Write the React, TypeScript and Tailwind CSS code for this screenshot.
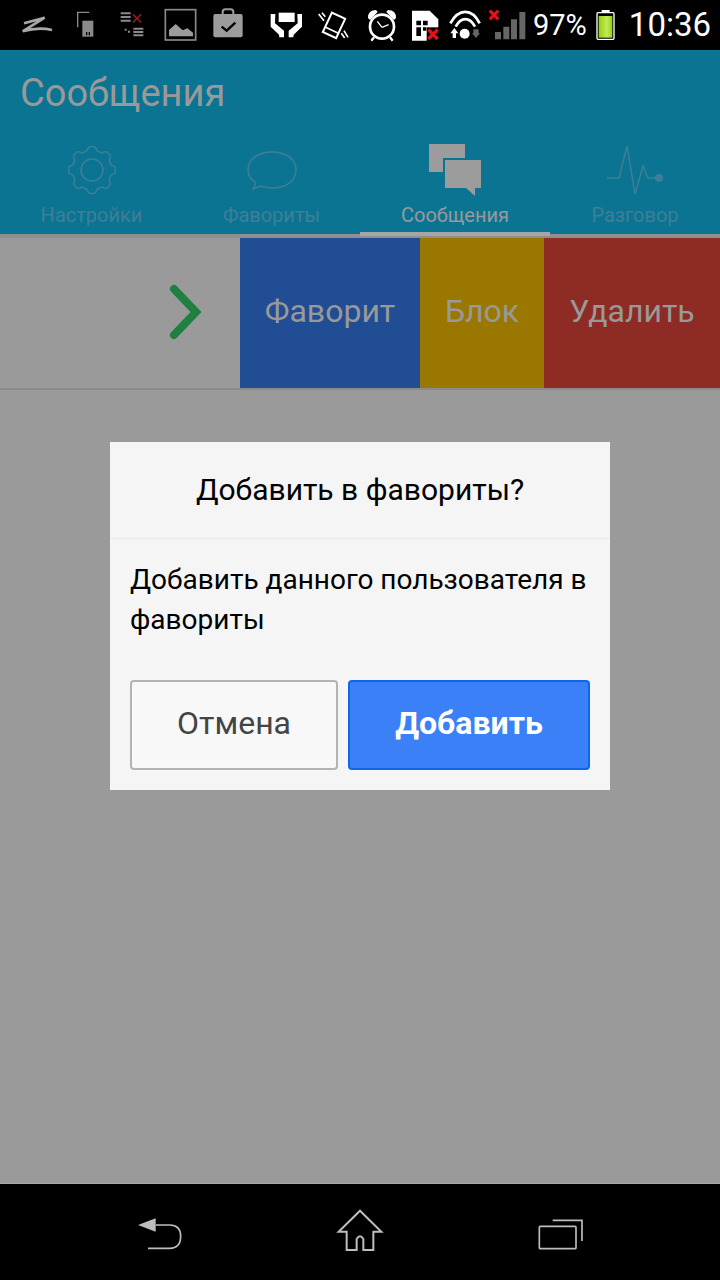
const FONT = "font-['Roboto',sans-serif]"

function gearPath() {
  const pts: string[] = []
  for (let i = 0; i < 160; i++) {
    const a = (i / 160) * Math.PI * 2
    const r = 21.5 + 2 * Math.tanh(2.2 * Math.cos(8 * a))
    pts.push(`${(24 + r * Math.cos(a)).toFixed(2)},${(24 + r * Math.sin(a)).toFixed(2)}`)
  }
  return `M${pts.join("L")}Z`
}

function RedX({ x, y, s }: { x: number; y: number; s: number }) {
  return (
    <path
      d={`M${x - s} ${y - s}L${x + s} ${y + s}M${x + s} ${y - s}L${x - s} ${y + s}`}
      stroke="#e8101a"
      strokeWidth={s * 0.7}
      fill="none"
    />
  )
}

function StatusIcons() {
  return (
    <>
      {/* coordinates are 3x picture px */}
      <svg className="ml-[20px] shrink-0" width={34} height={50} viewBox="60 0 102 150">
        <path d="M72 70L134 53L68 94C95 86 130 84 156 90" fill="none" stroke="#a8a8a8" strokeWidth={8} />
      </svg>
      <svg className="ml-[22px] shrink-0" width={18} height={50} viewBox="226 0 54 150">
        <path d="M266 37H231V82" fill="none" stroke="#8a8a8a" strokeWidth={4} />
        <path d="M245 62H278V110H245Z" fill="#8a8a8a" />
        <path d="M256 96h4v10h-4zM264 96h4v10h-4z" fill="#000" />
      </svg>
      <svg className="ml-[26px] shrink-0" width={26} height={50} viewBox="360 0 78 150">
        <path d="M362 40H392M362 51H392M362 62H392M400 86H430M400 96H430M400 106H430" stroke="#8a8a8a" strokeWidth={6} />
        <path d="M374 86h6v6h-6zM384 92h6v6h-6z" fill="#8a8a8a" />
        <path d="M399 43L423 67M423 43L399 67" stroke="#8c1c20" strokeWidth={5} />
      </svg>
      <svg className="ml-[18px] shrink-0" width={33} height={50} viewBox="490 0 99 150">
        <rect x={494} y={29} width={91} height={91} fill="none" stroke="#8a8a8a" strokeWidth={5} />
        <path d="M505 109V90L525 72L546 91L560 85L577 98V109Z" fill="#9c9c9c" />
      </svg>
      <svg className="ml-[16px] shrink-0" width={31} height={50} viewBox="639 0 93 150">
        <path d="M668 44V36Q668 28 676 28H692Q700 28 700 36V44" fill="none" stroke="#9c9c9c" strokeWidth={6} />
        <rect x={640} y={42} width={88} height={70} rx={6} fill="#9c9c9c" />
        <path d="M665 80L680 92L706 68" fill="none" stroke="#000" strokeWidth={7} />
      </svg>
      <svg className="ml-[26px] shrink-0" width={33} height={50} viewBox="810 0 99 150">
        <path d="M836 38H884V66H836Z" fill="#fff" />
        <path d="M812 42H826L825 70L852 92V112H838L837 104L812 80Z" fill="#fff" />
        <path d="M906 42H892L893 70L866 92V112H880L881 104L906 80Z" fill="#fff" />
      </svg>
      <svg className="ml-[15px] shrink-0" width={32} height={50} viewBox="954 0 96 150">
        <g transform="rotate(25 1002 76)">
          <rect x={980} y={44} width={44} height={64} fill="none" stroke="#fff" strokeWidth={6} />
          <path d="M980 92H1024" stroke="#fff" strokeWidth={5} />
        </g>
        <path d="M956 42L972 62M966 38L976 50M1032 92L1044 112M1024 100L1034 114" stroke="#fff" strokeWidth={5} />
      </svg>
      <svg className="ml-[16px] shrink-0" width={33} height={50} viewBox="18 0 99 150">
        <circle cx={66} cy={80} r={36} fill="none" stroke="#fff" strokeWidth={8} />
        <path d="M24 54Q24 30 48 30L53 36L30 60ZM108 54Q108 30 84 30L79 36L102 60Z" fill="#fff" />
        <path d="M66 82L52 64M66 82L86 74" fill="none" stroke="#fff" strokeWidth={4} />
        <path d="M42 112l-8 10M90 112l8 10" stroke="#fff" strokeWidth={7} />
      </svg>
      <svg className="ml-[13px] shrink-0" width={28} height={50} viewBox="153 0 84 150">
        <path d="M153 32H206L232 58V122H153Z" fill="#fff" />
        <path d="M166 62h14v14h-14zM186 62h14v14h-14zM166 82h14v26h-14zM186 82h10v10h-10z" fill="#000" />
        <path d="M197 82H237V126H197Z" fill="#000" />
        <RedX x={216} y={103} s={14} />
      </svg>
      <svg className="ml-[9px] shrink-0" width={34} height={50} viewBox="264 0 102 150">
        <path d="M268 70C293 24 333 24 356 70" fill="none" stroke="#fff" strokeWidth={8} />
        <path d="M284 80C300 50 326 50 342 80" fill="none" stroke="#fff" strokeWidth={8} />
        <circle cx={311} cy={101} r={15} fill="#fff" />
        <path d="M268 100L280 84L292 100H285V114H275V100Z" fill="#fff" />
        <path d="M337 88H353V100H357L345 114L333 100H337Z" fill="#666" />
      </svg>
      <svg className="ml-[5px] shrink-0" width={38} height={50} viewBox="378 0 114 150">
        <path d="M399 96H417V118H399ZM424 80H442V118H424ZM447 58H465V118H447ZM472 36H490V118H472Z" fill="#666" />
        <RedX x={396} y={45} s={13} />
      </svg>
      <span className="ml-[7px] text-[29px] leading-[50px] text-white">97%</span>
      <svg className="ml-[9px] shrink-0" width={20} height={50} viewBox="708 0 60 150">
        <path d="M725 36V30H749V36" fill="#fff" />
        <rect x={711} y={38} width={51} height={80} rx={3} fill="#000" stroke="#fff" strokeWidth={4} />
        <defs>
          <linearGradient id="batt" x1="0" x2="1" y1="0" y2="0">
            <stop offset="0" stopColor="#8fd010" />
            <stop offset="0.6" stopColor="#c4ec58" />
            <stop offset="1" stopColor="#8fd010" />
          </linearGradient>
        </defs>
        <rect x={716} y={48} width={41} height={65} fill="url(#batt)" />
      </svg>
      <span className="ml-[13px] text-[33px] leading-[50px] text-white">10:36</span>
    </>
  )
}

function Tab({
  label,
  width,
  active,
  icon,
}: {
  label: string
  width: string
  active?: boolean
  icon: React.ReactNode
}) {
  return (
    <div className={`relative flex flex-col items-center ${width}`}>
      <div className="flex h-[52px] items-center justify-center">{icon}</div>
      <span className={`mt-[7px] text-[20px] leading-[24px] ${active ? "text-[#999999]" : "text-[#3f7f96]"}`}>
        {label}
      </span>
      {active ? <div className="absolute bottom-[-2px] left-0 right-0 h-[4px] bg-[#a6a6a6]" /> : null}
    </div>
  )
}

export default function App() {
  return (
    <div className={`relative flex h-[1280px] w-[720px] flex-col overflow-hidden bg-[#9a9a9a] ${FONT}`}>
      <div className="flex h-[50px] shrink-0 items-center bg-black">
        <StatusIcons />
      </div>

      <div className="h-[184px] shrink-0 bg-[#0b7493]">
        <h1 className="pl-[20px] pt-[22px] text-[38px] font-normal leading-[42px] text-[#999999]">Сообщения</h1>
        <div className="mt-[30px] flex h-[90px]">
          <Tab
            label="Настройки"
            width="w-[183px]"
            icon={
              <svg width={48} height={48} viewBox="0 0 48 48" fill="none" stroke="#3f7f96" strokeWidth={1.5}>
                <path d={gearPath()} />
                <circle cx={24} cy={24} r={11} />
              </svg>
            }
          />
          <Tab
            label="Фавориты"
            width="w-[177px]"
            icon={
              <svg width={52} height={48} viewBox="0 0 52 48" fill="none" stroke="#3f7f96" strokeWidth={1.5}>
                <path d="M7 43C9 39 10 38 9 36C4 33 2 29 2 24C2 13 12 6 26 6C40 6 50 13 50 24C50 35 40 42 26 42C21 42 17 41 14 40C12 41 10 42 7 43Z" />
              </svg>
            }
          />
          <Tab
            label="Сообщения"
            width="w-[190px]"
            active
            icon={
              <svg width={52} height={52} viewBox="0 0 52 52" fill="#9c9c9c">
                <path d="M0 0H36V14H14V28H0Z" />
                <path d="M16 16H52V44H46V52L37 44H16Z" />
              </svg>
            }
          />
          <Tab
            label="Разговор"
            width="w-[170px]"
            icon={
              <svg width={56} height={50} viewBox="0 0 56 50" fill="none" stroke="#3f7f96" strokeWidth={1.5}>
                <path d="M0 33H12L20 1L28 49L36 21L41 33H52" />
                <circle cx={52} cy={33} r={4} fill="#3f7f96" stroke="none" />
              </svg>
            }
          />
        </div>
      </div>

      <div className="h-[4px] shrink-0 bg-[#8f8f8f]" />

      <div className="flex h-[152px] shrink-0 border-b-2 border-[#8a8a8a] bg-[#9a9a9a]">
        <div className="flex h-[150px] w-[240px] items-center justify-end pb-[2px] pr-[36px]">
          <svg width={36} height={60} viewBox="0 0 36 60" fill="none" stroke="#1f8040" strokeWidth={8}>
            <path d="M6 7L28 30L6 53" strokeLinecap="round" />
          </svg>
        </div>
        <div className="flex h-[150px] w-[180px] items-center justify-center bg-[#214d94] pb-[4px] text-[32px] text-[#999999]">
          Фаворит
        </div>
        <div className="flex h-[150px] w-[124px] items-center justify-center bg-[#9a7800] pb-[4px] text-[32px] text-[#999999]">
          Блок
        </div>
        <div className="flex h-[150px] w-[176px] items-center justify-center bg-[#8e2b24] pb-[4px] text-[32px] text-[#999999]">
          Удалить
        </div>
      </div>

      <div className="flex-1" />

      <div className="flex h-[97px] shrink-0 items-center border-t border-[#a8a8a8] bg-black">
        <svg className="ml-[137px] mt-[6px]" width={48} height={36} viewBox="112 118 144 108" fill="none">
          <path d="M168 142H210Q243 142 243 176Q243 212 210 212H145" stroke="#bdbdbd" strokeWidth={5} />
          <path d="M115 142L168 122V162Z" fill="#bdbdbd" />
        </svg>
        <svg className="mb-[2px] ml-[151px]" width={48} height={44} viewBox="708 90 144 132" fill="none">
          <path
            d="M716 158L780 95L844 158H820V213H790V180Q780 164 770 180V213H740V158Z"
            stroke="#bdbdbd"
            strokeWidth={6}
          />
        </svg>
        <svg className="ml-[154px] mt-[6px]" width={46} height={32} viewBox="1312 124 138 96" fill="none" stroke="#bdbdbd">
          <rect x={1316} y={146} width={110} height={67} rx={3} strokeWidth={5} />
          <path d="M1356 128H1444V190" strokeWidth={5} />
        </svg>
      </div>

      <div className="absolute left-[110px] top-[442px] w-[500px] bg-[#f5f5f5]">
        <div className="flex h-[97px] items-center justify-center border-b border-[#e8e8e8] pb-[2px] text-[30px] text-black">
          Добавить в фавориты?
        </div>
        <p className="px-[20px] pt-[21px] text-[28px] leading-[40px] text-black">
          Добавить данного пользователя в фавориты
        </p>
        <div className="flex gap-[10px] px-[20px] pb-[20px] pt-[40px]">
          <button className="h-[90px] w-[208px] rounded-[4px] border-2 border-[#b3b3b3] bg-[#f8f8f8] pb-[4px] text-[32px] text-[#444444]">
            Отмена
          </button>
          <button className="h-[90px] w-[242px] rounded-[4px] border-2 border-[#0f66ee] bg-[#3b80f6] pb-[4px] text-[32px] font-bold text-white">
            Добавить
          </button>
        </div>
      </div>
    </div>
  )
}
